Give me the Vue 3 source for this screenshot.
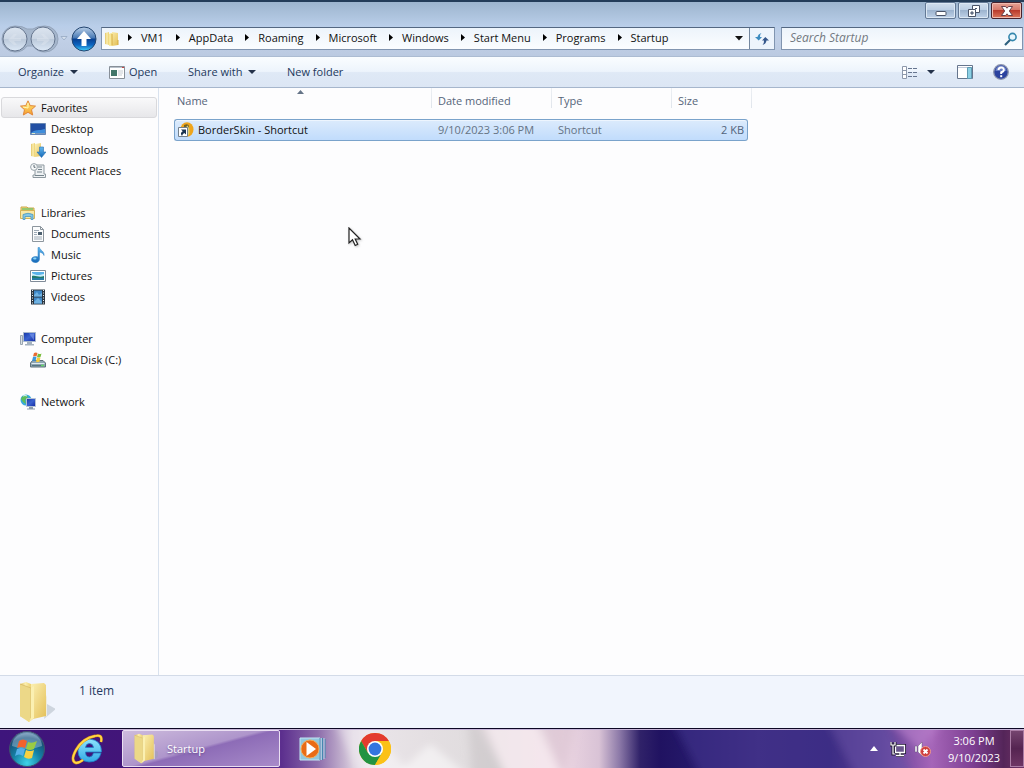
<script setup>
import { ref } from 'vue'

const crumbs = ['VM1', 'AppData', 'Roaming', 'Microsoft', 'Windows', 'Start Menu', 'Programs', 'Startup']
const search = ref('')

const groups = [
  {
    label: 'Favorites', icon: 'star', active: true,
    items: [
      { label: 'Desktop', icon: 'desktop' },
      { label: 'Downloads', icon: 'downloads' },
      { label: 'Recent Places', icon: 'recent' },
    ],
  },
  {
    label: 'Libraries', icon: 'libraries',
    items: [
      { label: 'Documents', icon: 'documents' },
      { label: 'Music', icon: 'music' },
      { label: 'Pictures', icon: 'pictures' },
      { label: 'Videos', icon: 'videos' },
    ],
  },
  { label: 'Computer', icon: 'computer', items: [{ label: 'Local Disk (C:)', icon: 'disk' }] },
  { label: 'Network', icon: 'network', items: [] },
]

const files = [{ name: 'BorderSkin - Shortcut', date: '9/10/2023 3:06 PM', type: 'Shortcut', size: '2 KB' }]
</script>

<template>
  <svg class="defs" width="0" height="0" aria-hidden="true">
    <defs>
      <linearGradient id="gFold" x1="0" x2="1" y1="0" y2="1"><stop offset="0" stop-color="#fdf3b8" /><stop offset="1" stop-color="#e3be55" /></linearGradient>
      <linearGradient id="gFold2" x1="0" x2="1"><stop offset="0" stop-color="#e2c568" /><stop offset=".5" stop-color="#fbeeae" /><stop offset="1" stop-color="#ecd06f" /></linearGradient>
      <linearGradient id="gScreen" x1="0" x2="1" y1="0" y2="1"><stop offset="0" stop-color="#1637a6" /><stop offset=".5" stop-color="#3a62d0" /><stop offset="1" stop-color="#1226a0" /></linearGradient>
      <linearGradient id="gBlue" x2="0" y2="1"><stop offset="0" stop-color="#62b8ee" /><stop offset="1" stop-color="#1668b8" /></linearGradient>
      <linearGradient id="gUp" x2="0" y2="1"><stop offset="0" stop-color="#b9cfe8" /><stop offset=".46" stop-color="#4778b4" /><stop offset=".5" stop-color="#073f91" /><stop offset=".75" stop-color="#0d65c0" /><stop offset="1" stop-color="#43d2fb" /></linearGradient>
      <linearGradient id="gNav" x2="0" y2="1"><stop offset="0" stop-color="#dce5f0" /><stop offset=".5" stop-color="#cbd6e4" /><stop offset=".52" stop-color="#bccadb" /><stop offset="1" stop-color="#dde9f7" /></linearGradient>
      <linearGradient id="gStar" x2="0" y2="1"><stop offset="0" stop-color="#fff27c" /><stop offset="1" stop-color="#f69b2c" /></linearGradient>
      <radialGradient id="gOrb" cx=".5" cy=".9" r=".9"><stop offset="0" stop-color="#3ed4e8" /><stop offset=".45" stop-color="#1581a5" /><stop offset=".8" stop-color="#175078" /><stop offset="1" stop-color="#7b9ebf" /></radialGradient>
      <linearGradient id="gIe" x2="0" y2="1"><stop offset="0" stop-color="#8fe4fd" /><stop offset="1" stop-color="#32a9e6" /></linearGradient>
    </defs>
    <symbol id="i-folder" viewBox="0 0 16 16"><path d="M1 2l4-1v13l-4-1z" fill="url(#gFold2)" /><path d="M5 3l3-1v-1l6 1v12l-6 1-3-1z" fill="url(#gFold)" /><path d="M8 2v12l-3 1V3z" fill="#f8e798" /><path d="M8 3v11M14 9v5" stroke="#d6ac43" /></symbol>
    <symbol id="i-star" viewBox="0 0 16 16"><path d="M8 .8l2.200 4.800 5.300.5-4 3.600 1.200 5.300L8 12.300l-4.700 2.700 1.200-5.300-4-3.600 5.300-.5z" fill="url(#gStar)" stroke="#e1873b" /><path d="M8 3v5L3 7" fill="none" stroke="#fff9b8" /></symbol>
    <symbol id="i-desktop" viewBox="0 0 16 16"><path d="M.5 2.500h15v11H.5z" fill="#3b77c9" stroke="#6786b3" /><path d="M1 3h14v5L1 13z" fill="#224fa3" /><path d="M1 12c4-4 8-2 14-4v4z" fill="#3f8edc" /><path d="M1 12.500h14" stroke="#7898bf" /><path d="M2 12.500h3" stroke="#dce9c8" /></symbol>
    <symbol id="i-downloads" viewBox="0 0 16 16"><path d="M1 2l4-1v14l-4-1z" fill="url(#gFold2)" /><path d="M5 2l6-1v13l-6 1z" fill="url(#gFold)" /><path d="M9.500 5h4v5H16l-4.500 5.500L7 10h2.500z" fill="url(#gBlue)" stroke="#2a6fae" stroke-width=".6" /></symbol>
    <symbol id="i-recent" viewBox="0 0 16 16"><path d="M5 2h9v9h1.500v3.500H3V12h2z" fill="#eef1f3" stroke="#8d989f" /><path d="M8 4h4M8 6.500h4M7 9h5M5 12.500h9" stroke="#76858d" /><circle cx="4" cy="4" r="3.400" fill="#f8fafb" stroke="#98a3aa" /><path d="M4 2v2.300h1.500" stroke="#5a6872" fill="none" /></symbol>
    <symbol id="i-libraries" viewBox="0 0 16 16"><path d="M1 2h6l1 1h6v3H1z" fill="#efd67b" stroke="#cda94c" /><path d="M2 4h11" stroke="#7ac36c" stroke-width="1.500" /><path d="M.5 5.500h14v8H.5z" fill="#f8e8a6" stroke="#d5b558" /><path d="M3 14.500V9.500q5-2.500 10 0v5h-2v-3H5v3z" fill="#83c7e8" stroke="#4c97bd" stroke-width=".8" /></symbol>
    <symbol id="i-documents" viewBox="0 0 16 16"><path d="M2.500.5h8l3 3v12h-11z" fill="#fbfcfd" stroke="#8d969e" /><path d="M10.500.5v3h3" fill="none" stroke="#8b949c" /><path d="M4 4.500h5M4 6.500h3M4 8.500h3M4 11h8M4 13h8" stroke="#9eabb7" /><path d="M8 6h4v3H8z" fill="#4c6070" /></symbol>
    <symbol id="i-music" viewBox="0 0 16 16"><path d="M8 .5h1.500c.5 3 5 3.500 4.500 8-.4-2-2.500-3-4.500-3.500V12c0 5-8.500 4.500-8 .5C1.800 9.500 5.500 9 8 10z" fill="url(#gBlue)" stroke="#2a81c4" stroke-width=".5" /><ellipse cx="4.800" cy="11.500" rx="1.700" ry="1" fill="#8ad5f6" /></symbol>
    <symbol id="i-pictures" viewBox="0 0 16 16"><path d="M.5 2.500h15v11H.5z" fill="#fff" stroke="#808b98" /><path d="M2 4h12v8H2z" fill="#5ab2ea" /><path d="M2 5c5 3 7 2 12 1v3H2z" fill="#c8ecf9" /><path d="M2 8c4-1 7 2 12 0v4H2z" fill="#20796d" /><path d="M2 10h12v2H2z" fill="#257ba7" /></symbol>
    <symbol id="i-videos" viewBox="0 0 16 16"><path d="M1 .5h14v15H1z" fill="#2c3640" /><path d="M4 1.500h8v6H4zM4 8.500h8v6H4z" fill="#3e87c7" /><path d="M4 6l3-3 2 3 3-2v3.500H4zM4 13l4-4 4 4v1.500H4z" fill="#6fb2e2" /><path d="M2.500 1v14M13.500 1v14" stroke="#e6edf2" stroke-dasharray="1 1.500" /></symbol>
    <symbol id="i-computer" viewBox="0 0 16 16"><path d="M.5 4.500h2v9h-2z" fill="#d9dfe4" stroke="#9aa6b1" /><path d="M3.500 1.500h12v9h-12z" fill="url(#gScreen)" stroke="#aab9cd" /><path d="M9 2.500h5v7z" fill="#7e9deb" opacity=".6" /><path d="M7 11h5v2h2v1.500H5V13h2z" fill="#a4b1bf" /></symbol>
    <symbol id="i-disk" viewBox="0 0 16 16"><path d="M2.500 8.500h10.500l2.500 2.500v4H.5v-4z" fill="#8fa5b3" stroke="#5d707b" /><path d="M1.500 11.500h13" stroke="#ddebf1" /><path d="M2 13.500h9" stroke="#557582" /><path d="M11 13.500h3" stroke="#62d767" stroke-width="1.500" /><path d="M4 1q2-1 3.500 0L6.500 4.500q-1-1-3.500 0z" fill="#e96b32" /><path d="M8 1.500q1.500 1 3.500 0L10.500 5q-2 1-3.500 0z" fill="#78bd3c" /><path d="M3 5q2-1 3.500 0L5.500 9q-1-1-3.500 0z" fill="#3b97dc" /><path d="M7 5.500q1.500 1 3.500 0L9.500 9.500q-2 1-3.500 0z" fill="#f6cb3b" /></symbol>
    <symbol id="i-network" viewBox="0 0 16 16"><circle cx="6" cy="6" r="5.500" fill="#38a9dd" /><path d="M2 3q4-4 6 0L5 6l1 4-3-2-2-3z" fill="#5dbd5b" /><path d="M3 2q2-1 4 0" stroke="#d6f4fb" fill="none" /><path d="M6.500 4.500h9v8h-9z" fill="url(#gScreen)" stroke="#b5c2d4" /><path d="M9 13h4v1.500h2v1H7v-1h2z" fill="#8b9cac" /></symbol>
    <symbol id="i-bigfolder" viewBox="0 0 36 42"><path d="M25 38l12-10-9-5z" fill="#9ca4ae" opacity=".4" /><path d="M1 3l6-2 5 2v34l-2 4-9-6z" fill="url(#gFold2)" /><path d="M12 3l13-1 2 2v31l-13 3-4 3z" fill="url(#gFold)" /><path d="M1 3l11 4v30l-2 4-9-6z" fill="#ecd888" /><path d="M1 3l11 4v30" fill="none" stroke="#d5b863" stroke-width=".7" /><path d="M12 7l3-2v32l-5 4 2-4z" fill="#fbf0b1" /><path d="M27 14l1 2v19l-1 1z" fill="#efecdc" /></symbol>
  </svg>

  <div class="screen">
    <main class="window">
      <header class="frame">
        <div class="caption">
          <button class="cap" aria-label="Minimize"><svg width="14" height="12" viewBox="0 0 14 12"><rect x="2" y="6.500" width="10" height="4" rx="1" fill="#fff" stroke="#4a5468" /></svg></button>
          <button class="cap" aria-label="Restore"><svg width="14" height="12" viewBox="0 0 14 12"><path d="M5.500.5h7v7h-7z" fill="#fff" stroke="#4a5468" /><path d="M8 3.500h2" stroke="#4a5468" /><path d="M1.500 4.500h7v7h-7z" fill="#fff" stroke="#4a5468" /><path d="M4 7h2v2H4z" fill="#a5b9d2" stroke="#4a5468" /></svg></button>
          <button class="cap close" aria-label="Close"><svg width="14" height="12" viewBox="0 0 14 12"><path d="M1.500 1.500h4L7 3.200l1.500-1.700h4L9.300 6l3.200 4.500h-4L7 8.800l-1.500 1.700h-4L4.700 6z" fill="#fff" stroke="#5b3440" stroke-width=".9" /></svg></button>
        </div>
        <nav class="navbar" aria-label="Address">
          <div class="travel">
            <svg class="rail" width="58" height="28" viewBox="0 0 58 28" aria-hidden="true"><path d="M14 1q8 0 12 3h6q4-3 12-3a13 13 0 0 1 0 26q-8 0-12-6h-6q-4 6-12 6a13 13 0 0 1 0-26z" fill="#a5b6cc" stroke="#94a4ba" /></svg>
            <button class="round" aria-label="Back"><svg width="26" height="26" viewBox="0 0 26 26"><circle cx="13" cy="13" r="12" fill="url(#gNav)" stroke="#65758e" /><path d="M19 12h-7l3-4h-3l-6 6 6 5h3l-3-4h7z" fill="#dfe7f0" opacity=".45" /></svg></button>
            <button class="round" aria-label="Forward"><svg width="26" height="26" viewBox="0 0 26 26"><circle cx="13" cy="13" r="12" fill="url(#gNav)" stroke="#65758e" /><path d="M7 12h7l-3-4h3l6 6-6 5h-3l3-4H7z" fill="#dfe7f0" opacity=".45" /></svg></button>
            <button class="recentbtn" aria-label="Recent pages"><svg width="8" height="5" viewBox="0 0 8 5"><path d="M1 .5h6l-3 3.500z" fill="#d7e1ee" stroke="#95a8c2" stroke-width=".8" /></svg></button>
            <button class="round" aria-label="Up"><svg width="26" height="26" viewBox="0 0 26 26"><circle cx="13" cy="13" r="12" fill="url(#gUp)" stroke="#234570" /><path d="M13 5l7 8h-4.500v7h-5v-7H6z" fill="#fff" /></svg></button>
          </div>
          <div class="address">
            <svg class="i16" aria-hidden="true"><use href="#i-folder" /></svg>
            <ol>
              <li v-for="c in crumbs" :key="c">
                <svg width="4" height="7" viewBox="0 0 4 7" aria-hidden="true"><path d="M0 0l4 3.500L0 7z" fill="#000" /></svg>
                <a href="#">{{ c }}</a>
              </li>
            </ol>
            <button class="history" aria-label="Previous locations"><svg width="8" height="5" viewBox="0 0 8 5"><path d="M0 0h8L4 4.500z" fill="#111" /></svg></button>
            <button class="refresh" aria-label="Refresh"><svg width="14" height="14" viewBox="0 0 14 14"><path d="M6.500 1Q4.700 2.500 5 5h2L3.700 8.500 0 5h2.500Q3 2 6.500 1z" fill="#3d8cc0" /><path d="M7.500 13Q9.300 11.500 9 8.500H7L10.300 5 14 8.500h-2.500Q11 12 7.500 13z" fill="#35578c" /></svg></button>
          </div>
          <label class="search">
            <input v-model="search" type="text" aria-label="Search Startup" placeholder="Search Startup">
            <svg width="14" height="14" viewBox="0 0 14 14" aria-hidden="true"><circle cx="8.500" cy="5" r="3.600" fill="#e8f6fd" stroke="#3487ad" stroke-width="1.600" /><path d="M6 8l-5 5" stroke="#2d607f" stroke-width="2.200" /></svg>
          </label>
        </nav>
      </header>

      <div class="toolbar" role="toolbar">
        <button class="organize">Organize<i class="tri"></i></button>
        <button class="open"><svg width="16" height="13" viewBox="0 0 16 13" aria-hidden="true"><path d="M.5.500h15v12H.5z" fill="#fff" stroke="#878f98" /><path d="M1 1.500h14" stroke="#b9c2cb" /><path d="M13 1.500h2" stroke="#c44545" /><path d="M2 4h6v6H2z" fill="#427669" /><path d="M9 5h5M9 7h5M9 9h4" stroke="#c6ccd2" /></svg>Open</button>
        <button class="share">Share with<i class="tri"></i></button>
        <button class="newfolder">New folder</button>
        <span class="spacer"></span>
        <button class="views" aria-label="Change view"><svg width="16" height="13" viewBox="0 0 16 13"><path d="M.5.5h4v12h-4zM.5 4.500h4M.5 8.500h4" fill="#fff" stroke="#8d98aa" /><path d="M6 2.500h4m1 0h4M6 6.500h4m1 0h4M6 10.500h4m1 0h4" stroke="#66758f" /></svg><i class="tri"></i></button>
        <button class="preview" aria-label="Preview pane"><svg width="16" height="14" viewBox="0 0 16 14"><path d="M.5.500h15v13H.5z" fill="#fff" stroke="#65758d" /><path d="M1 2.500h14" stroke="#c2cbda" /><path d="M10.500 2.500h4v11h-4z" fill="#8cd0e4" stroke="#5f9bb2" /></svg></button>
        <button class="help" aria-label="Help"><svg width="16" height="16" viewBox="0 0 16 16"><circle cx="8" cy="8" r="7.300" fill="#2b429f" stroke="#8b94ad" stroke-width="1.300" /><path d="M2.500 7a5.500 5.500 0 0 1 11 0z" fill="#697fc6" /><path d="M5.500 6q0-2.500 2.700-2.500T10.800 6Q10.800 7.500 8.200 8.200V10" fill="none" stroke="#fff" stroke-width="2" /><path d="M7.200 11.200h2v2h-2z" fill="#fff" /></svg></button>
      </div>

      <div class="body">
        <aside class="sidebar">
          <section v-for="g in groups" :key="g.label">
            <a href="#" class="node head" :class="{ active: g.active }"><svg class="i16" aria-hidden="true"><use :href="'#i-' + g.icon" /></svg>{{ g.label }}</a>
            <a v-for="it in g.items" :key="it.label" href="#" class="node"><svg class="i16" aria-hidden="true"><use :href="'#i-' + it.icon" /></svg>{{ it.label }}</a>
          </section>
        </aside>
        <div class="files">
          <table>
            <colgroup><col class="c-name"><col class="c-date"><col class="c-type"><col class="c-size"><col class="c-end"></colgroup>
            <thead>
              <tr>
                <th scope="col" class="name">Name<svg class="sort" width="7" height="4" viewBox="0 0 7 4" aria-hidden="true"><path d="M0 4l3.500-4L7 4z" fill="#657487" /></svg></th>
                <th scope="col">Date modified</th>
                <th scope="col">Type</th>
                <th scope="col" class="last">Size</th>
                <td class="edge"></td>
              </tr>
            </thead>
            <tbody>
              <tr v-for="f in files" :key="f.name">
                <td class="first">
                  <svg width="16" height="16" viewBox="0 0 16 16" aria-hidden="true"><ellipse cx="9" cy="7.500" rx="6.500" ry="7.300" fill="#efa51d" /><path d="M6 3q4-2 5 1v9H6z" fill="#716327" /><path d="M9 4q3 4 1 9" stroke="#dad17d" stroke-width="1.500" fill="none" /><path d="M.5 5.500h9v9h-9z" fill="#fff" stroke="#73808c" /><path d="M3 7.500h5v5L6.300 11Q4.500 12 4 14 1.500 11 4.700 9.300z" fill="#1a3350" /></svg>
                  <span>{{ f.name }}</span>
                </td>
                <td class="mid">{{ f.date }}</td>
                <td class="mid">{{ f.type }}</td>
                <td class="size">{{ f.size }}</td>
              </tr>
            </tbody>
          </table>
        </div>
      </div>

      <footer class="details">
        <svg width="36" height="42" aria-hidden="true"><use href="#i-bigfolder" /></svg>
        <span>1 item</span>
      </footer>
    </main>

    <footer class="taskbar">
      <svg class="wall" viewBox="0 0 1024 39" preserveAspectRatio="none" aria-hidden="true">
        <defs>
          <linearGradient id="wall"><stop offset="0" stop-color="#3e157c" /><stop offset=".12" stop-color="#421579" /><stop offset=".275" stop-color="#5c2f8e" /><stop offset=".31" stop-color="#8c6cab" /><stop offset=".345" stop-color="#d9cddc" /><stop offset=".37" stop-color="#e9e4e8" /><stop offset=".42" stop-color="#e4dfe2" /><stop offset=".49" stop-color="#dedbdc" /><stop offset=".55" stop-color="#ecd6e2" /><stop offset=".585" stop-color="#d9c3d6" /><stop offset=".605" stop-color="#8c79a8" /><stop offset=".625" stop-color="#302269" /><stop offset=".645" stop-color="#201261" /><stop offset=".67" stop-color="#241868" /><stop offset=".74" stop-color="#392879" /><stop offset=".81" stop-color="#322276" /><stop offset=".86" stop-color="#593b91" /><stop offset=".91" stop-color="#a565b8" /><stop offset=".95" stop-color="#7d3f92" /><stop offset=".98" stop-color="#542559" /><stop offset="1" stop-color="#713366" /></linearGradient>
          <filter id="soft" filterUnits="userSpaceOnUse" x="0" y="-20" width="1024" height="80"><feGaussianBlur stdDeviation="4" /></filter>
        </defs>
        <path d="M0 0h1024v39H0z" fill="url(#wall)" />
        <g filter="url(#soft)">
          <path d="M335-10h30l50 60h-55z" fill="#fff" opacity=".4" />
          <path d="M430 14l42 36h-80z" fill="#fff" opacity=".5" />
          <path d="M474-10l34 60h55L534-10z" fill="#f9edf2" opacity=".7" />
          <path d="M468-10h15l24 60h-35z" fill="#bdb9bb" opacity=".4" />
          <path d="M540-10h36l-12 60z" fill="#d8c3d0" opacity=".6" />
          <path d="M672-10l30 60h150L826-10z" fill="#453794" opacity=".5" />
          <path d="M826-10h60l28 60h-58z" fill="#6752a8" opacity=".6" />
          <path d="M886-10h56l-20 32z" fill="#bd83cf" opacity=".6" />
        </g>
      </svg>
      <button class="start" aria-label="Start"><svg width="38" height="38" viewBox="0 0 38 38"><circle cx="19" cy="19" r="17.500" fill="url(#gOrb)" stroke="#40516d" /><path d="M4 16a15 13 0 0 1 30 0Q19 22 4 16z" fill="#c7deee" opacity=".38" /><path d="M11 11q4-3 8 0l-2 7q-4-2-8 0z" fill="#f2622d" /><path d="M20 12q4 2 9-1l-3 8q-4 2-8 0z" fill="#9acb43" /><path d="M9 19q4-2 8 0l-2 7q-4-3-8 0z" fill="#54afe9" /><path d="M18 20q4 2 8 0l-2 8q-4 2-8-1z" fill="#f8d142" /></svg></button>
      <button class="pin ie" aria-label="Internet Explorer"><svg width="34" height="34" viewBox="0 0 34 34"><path d="M22.500 21h7.500Q28 30 18 30 7 29 7 18.500 8 8 18.500 7q12 1 12 13H14.500q0 5 4 5 3 0 4-4zM14.500 15.500h8q-.5-4-4-4-3.500 0-4 4z" fill="url(#gIe)" stroke="#1d83c7" stroke-width=".8" /><path d="M30 10q2-8-6-6Q12 6 5 18-1 29 5 31q3 0 7-3" fill="none" stroke="#d68b16" stroke-width="2.800" /><path d="M30 10q2-8-6-6Q12 6 5 18-1 29 5 31q3 0 7-3" fill="none" stroke="#ffd745" stroke-width="1.800" /></svg></button>
      <button class="task"><svg width="26" height="31" viewBox="0 0 30 42" aria-hidden="true"><use href="#i-bigfolder" width="36" height="42" /></svg>Startup</button>
      <button class="pin media" aria-label="Windows Media Player"><svg width="28" height="26" viewBox="0 0 28 26"><path d="M1 2h20v22H1z" fill="#91c7df" stroke="#c3e6f3" /><path d="M21 2v22M23.500 2v22M26 3v19" stroke="#4587af" /><path d="M22.300 2v22M25 2v21" stroke="#b4ddec" /><circle cx="11" cy="13" r="9" fill="#e96b16" stroke="#f4ad5b" /><path d="M7.500 6l9.500 7-9.500 7z" fill="#fff" /></svg></button>
      <button class="pin" aria-label="Google Chrome"><svg width="32" height="32" viewBox="0 0 32 32"><circle cx="16" cy="16" r="16" fill="#fbc116" /><path d="M2.140 8A16 16 0 0 1 29.860 8H16l-6.930 12z" fill="#e33b2e" /><path d="M2.140 8A16 16 0 0 0 16 32l6.930-12-13.860 0z" fill="#229342" /><path d="M29.860 8A16 16 0 0 1 16 32l6.930-12L16 8z" fill="#fbc116" /><circle cx="16" cy="16" r="8" fill="#fff" /><circle cx="16" cy="16" r="6.400" fill="#3475df" /></svg></button>
      <span class="spacer"></span>
      <div class="tray">
        <button class="more" aria-label="Show hidden icons"><svg width="8" height="5" viewBox="0 0 8 5"><path d="M0 5l4-5 4 5z" fill="#fff" /></svg></button>
        <button aria-label="Network status"><svg width="16" height="16" viewBox="0 0 16 16"><path d="M5.500 4.500h9v7h-9zM10 12v2M6 14.500h8" fill="#69558c" stroke="#211833" stroke-width="3" /><path d="M5.500 4.500h9v7h-9zM10 12v2M6 14.500h8" fill="#69558c" stroke="#fff" stroke-width="1.300" /><path d="M1 1v3h4V1M3 4v9h2" fill="none" stroke="#211833" stroke-width="3" /><path d="M1 1v3h4V1M3 4v9h2" fill="none" stroke="#fff" stroke-width="1.200" /></svg></button>
        <button aria-label="Volume muted"><svg width="17" height="16" viewBox="0 0 17 16"><path d="M1 5h2v6H1zM4 5l4-4v14l-4-4z" fill="#fff" stroke="#67577a" stroke-width=".5" /><circle cx="11.500" cy="10.500" r="5" fill="#cf3d3d" stroke="#ed9a92" /><path d="M9.500 8.500l4 4m0-4l-4 4" stroke="#fff" stroke-width="1.800" /></svg></button>
        <button class="clock"><time>3:06 PM</time><time>9/10/2023</time></button>
        <button class="peek" aria-label="Show desktop"></button>
      </div>
    </footer>

    <svg class="cursor" width="14" height="20" viewBox="0 0 14 20" aria-hidden="true"><path d="M1 1v15l3.500-3.200 2.700 5.700 2.500-1.200L7.200 12H12z" fill="#fff" stroke="#222" stroke-width="1.200" /></svg>
  </div>
</template>

<style>
html, body { margin: 0; }
</style>

<style scoped>
* { box-sizing: border-box; }
button { border: 0; padding: 0; background: none; font: inherit; color: inherit; display: flex; align-items: center; }
a { color: inherit; text-decoration: none; }
svg { display: block; flex: none; }
.defs { position: absolute; }
.i16 { width: 16px; height: 16px; }
.spacer { flex: 1; }
.screen { position: relative; display: flex; flex-direction: column; min-height: 100vh; font: 11px/16px "Open Sans", "Noto Sans", sans-serif; color: #111; }
.window { flex: 1; display: flex; flex-direction: column; background: #fdfdfe; }

.frame { height: 57px; border-top: 2px solid #243d59; border-bottom: 1px solid #acbcd2; background: linear-gradient(#9db5ce, #b9cee9 24px, #c1d0e7 36px, #bbcae1); }
.caption { display: flex; justify-content: flex-end; gap: 2px; height: 25px; padding: 0 2px; }
.cap { width: 31px; height: 17px; justify-content: center; border: 1px solid #637995; border-radius: 2px; background: linear-gradient(#d0deed, #bbcee4 48%, #9db4cf 50%, #bfd2e8); box-shadow: inset 0 0 0 1px #dce8f4; }
.close { border-color: #48222c; background: linear-gradient(#e7a295, #d57768 48%, #b93b2c 50%, #dc765b); box-shadow: inset 0 0 0 1px #eebbb0; }
.navbar { display: flex; height: 23px; align-items: center; padding: 0 1px 0 2px; }
.travel { position: relative; width: 99px; display: flex; align-items: center; gap: 2px; }
.rail { position: absolute; left: -1px; top: -1px; }
.round { position: relative; }
.recentbtn { width: 11px; justify-content: center; }
.address { flex: 1; min-width: 0; display: flex; align-items: center; height: 23px; border: 1px solid #8195b0; border-top-color: #536781; background: linear-gradient(#edf4fb, #fbfdff); padding-left: 2px; }
.address ol { display: flex; margin: 0; padding: 0 0 2px 8px; list-style: none; gap: 12px; flex: 1; }
.address li { display: flex; align-items: center; gap: 9px; white-space: nowrap; }
.history { width: 20px; height: 21px; justify-content: center; }
.refresh { width: 25px; height: 21px; justify-content: center; border-left: 1px solid #73879f; background: #edf4fc; }
.search { flex: 0 0 242px; margin-left: 6px; height: 23px; display: flex; align-items: center; padding: 0 4px 0 8px; border: 1px solid #8195b0; border-top-color: #536781; background: linear-gradient(#edf4fb, #fbfdff); }
.search input { flex: 1; min-width: 0; border: 0; outline: 0; padding: 0 0 2px; background: none; font: inherit; font-size: 12px; }
.search input::placeholder { color: #737981; font-style: italic; opacity: 1; }

.toolbar { display: flex; align-items: center; height: 31px; padding: 0 15px 0 18px; border-bottom: 1px solid #a6b6cc; background: linear-gradient(#fafdff, #edf4fc 48%, #dfe9f6 52%, #dce6f4); color: #24395c; }
.tri { width: 0; height: 0; border: 4px solid transparent; border-top-color: #24324a; border-bottom: 0; }
.organize { width: 91px; gap: 6px; }
.open { width: 79px; gap: 4px; }
.share { width: 99px; gap: 6px; }
.views { width: 55px; gap: 9px; }
.preview { width: 36px; }

.body { flex: 1; display: flex; }
.sidebar { width: 159px; padding: 9px 1px 0; border-right: 1px solid #d9e2ee; }
.sidebar section { padding-bottom: 21px; }
.node { display: flex; align-items: center; gap: 5px; height: 21px; padding-left: 28px; border: 1px solid transparent; border-radius: 3px; }
.node.head { padding-left: 18px; }
.node.active { border-color: #d9d9dc; background: linear-gradient(#f9f9fa, #e7e7ea); }
.files { flex: 1; padding-left: 15px; }
table { table-layout: fixed; width: 578px; border-spacing: 0; }
.c-name { width: 258px; }
.c-date, .c-type { width: 120px; }
.c-size { width: 76px; }
.c-end { width: 4px; }
th, td { padding: 0; font-weight: 400; text-align: left; }
th, .edge { height: 31px; background: linear-gradient(#eceff3, #e0e5eb) no-repeat right top / 1px 20px; }
th { position: relative; padding: 5px 0 0 6px; vertical-align: top; color: #56657a; }
th.name { padding-left: 3px; }
th.last { background: none; }
.sort { position: absolute; left: 123px; top: 2px; }
tbody td { height: 22px; border: solid #7aa3cb; border-width: 1px 0; background: linear-gradient(#dcebfc, #c1dcfc); box-shadow: inset 0 1px #edf5fe; }
.first { display: flex; align-items: center; gap: 4px; padding-left: 3px; border-left-width: 1px; border-radius: 3px 0 0 3px; }
.mid { padding-left: 6px; color: #657384; }
.size { padding-right: 3px; border-right-width: 1px; border-radius: 0 3px 3px 0; text-align: right; color: #52647b; }
.details { display: flex; height: 53px; padding: 5px 0 0 19px; gap: 24px; border-top: 1px solid #d3dbe8; background: #f1f5fd; color: #263a61; }
.details span { padding-top: 2px; font-size: 12px; }

.taskbar { position: relative; display: flex; align-items: center; height: 40px; border-top: 1px solid #0d0724; color: #fff; background: #3e157c; }
.start, .pin, .task, .tray { position: relative; }
.wall { position: absolute; inset: 0; width: 100%; height: 100%; border-top: 1px solid #c7b4d8; }
.start { width: 54px; justify-content: center; }
.pin { width: 62px; justify-content: center; }
.ie { width: 68px; }
.media { margin-left: 2px; }
.task { width: 158px; height: 37px; gap: 9px; padding-left: 9px; border: 1px solid #eadff2; border-radius: 2px; background: linear-gradient(165deg, #cdbbdd, #ae95cb 48%, #8d6cb7 52%, #a88bc9); text-shadow: 0 1px 2px #6a4b90; }
.tray { display: flex; align-items: center; height: 39px; gap: 8px; }
.more { margin-right: 4px; }
.clock { flex-direction: column; width: 70px; line-height: 17px; }
.peek { width: 14px; height: 37px; margin-left: -7px; border: 1px solid #aa7ca5; background: linear-gradient(#75446f, #552451 50%, #6d3564); }
.cursor { position: absolute; left: 348px; top: 227px; filter: drop-shadow(1px 1px 1px #9999); }
</style>
